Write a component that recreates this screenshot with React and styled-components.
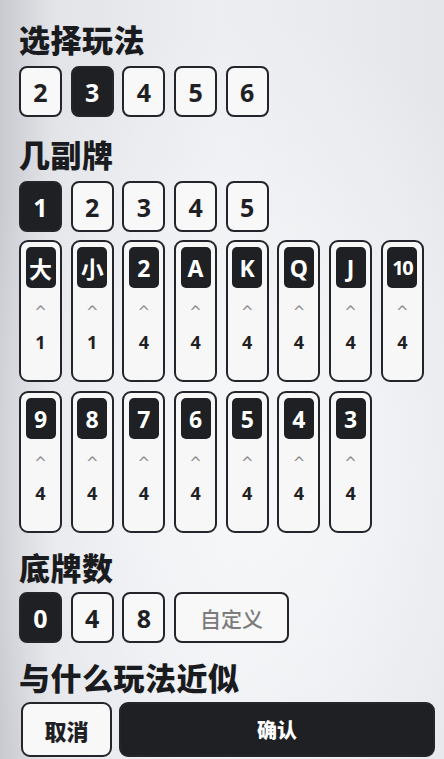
import styled, { createGlobalStyle } from 'styled-components';

const GlobalStyle = createGlobalStyle`
  html, body {
    margin: 0;
    padding: 0;
  }
  body {
    font-family: "Noto Sans", "Noto Sans CJK SC", sans-serif;
    color: #1e2024;
  }
`;

const Page = styled.div`
  width: 444px;
  height: 759px;
  box-sizing: border-box;
  overflow: hidden;
  padding: 20px 9px 0 19px;
  background:
    radial-gradient(ellipse 70% 60% at 58% 62%, #f7f8fa 0%, rgba(247, 248, 250, 0) 100%),
    linear-gradient(90deg, #c8cad0 0%, #e2e4e8 12%, #eceef1 50%, #e4e6ea 100%);
`;

const Section = styled.section`
  display: flex;
  flex-direction: column;
  gap: ${p => p.$gap || 9}px;
  margin-top: ${p => p.$top || 0}px;
`;

const Title = styled.h2`
  margin: 0;
  font-family: "Noto Sans CJK SC", sans-serif;
  font-size: 31px;
  font-weight: 900;
  line-height: 37px;
  letter-spacing: 0.5px;
  color: #1a1b1e;
`;

const Row = styled.div`
  display: flex;
  gap: 8.7px;
`;

const Chip = styled.button`
  box-sizing: border-box;
  width: ${p => p.$wide ? '115px' : '43px'};
  height: 51px;
  padding: 0;
  border: 2px solid #23252a;
  border-radius: 8px;
  background: ${p => p.$on ? '#1e2024' : '#f8f8f8'};
  color: ${p => p.$on ? '#ffffff' : p.$muted ? '#7c7c7c' : '#1e2024'};
  font-family: "Noto Sans", "Noto Sans CJK SC", sans-serif;
  font-size: ${p => p.$wide ? '21px' : '25px'};
  font-weight: ${p => p.$wide ? 500 : 700};
  display: flex;
  align-items: center;
  justify-content: center;
`;

const CardGrid = styled.div`
  display: grid;
  grid-template-columns: repeat(8, 43px);
  column-gap: 8.7px;
  row-gap: 9px;
  margin-top: -1px;
`;

const Card = styled.div`
  box-sizing: border-box;
  height: 142px;
  border: 2px solid #23252a;
  border-radius: 9px;
  background: #f7f7f7;
  padding-top: 5px;
  display: flex;
  flex-direction: column;
  align-items: center;
`;

const Face = styled.div`
  width: 30px;
  height: 41px;
  border-radius: 5px;
  background: #1e2024;
  color: #ffffff;
  font-family: "Noto Sans", "Noto Sans CJK SC", sans-serif;
  font-size: ${p => p.$small ? '20px' : '23px'};
  font-weight: 700;
  letter-spacing: ${p => p.$small ? '-1.5px' : '0'};
  display: flex;
  align-items: center;
  justify-content: center;
`;

const Caret = styled.div`
  margin-top: 17px;
  color: #8a8a8a;
  font-size: 15px;
  line-height: 14px;
  font-family: "DejaVu Sans", sans-serif;
`;

const Count = styled.div`
  margin-top: 13px;
  font-size: 18px;
  font-weight: 700;
  line-height: 20px;
  color: #1e2024;
`;

const Actions = styled.div`
  display: flex;
  gap: 7px;
  padding-left: 2px;
`;

const Action = styled.button`
  box-sizing: border-box;
  height: 55px;
  width: ${p => p.$primary ? 'auto' : '91px'};
  flex: ${p => p.$primary ? 1 : 'none'};
  border: 2px solid #23252a;
  border-radius: 9px;
  background: ${p => p.$primary ? '#1e2024' : '#f8f8f8'};
  color: ${p => p.$primary ? '#ffffff' : '#1e2024'};
  font-family: "Noto Sans CJK SC", sans-serif;
  font-size: ${p => p.$primary ? '20px' : '22px'};
  font-weight: 900;
  padding: 0;
`;

const players = [2, 3, 4, 5, 6];
const decks = [1, 2, 3, 4, 5];
const cards = [
  ['大', 1], ['小', 1], ['2', 4], ['A', 4], ['K', 4], ['Q', 4], ['J', 4], ['10', 4],
  ['9', 4], ['8', 4], ['7', 4], ['6', 4], ['5', 4], ['4', 4], ['3', 4],
];
const bottom = [0, 4, 8];

export default function App() {
  return (
    <Page>
      <GlobalStyle />
      <Section>
        <Title>选择玩法</Title>
        <Row>
          {players.map(n => <Chip key={n} $on={n === 3}>{n}</Chip>)}
        </Row>
      </Section>

      <Section $top={18} $gap={9}>
        <Title>几副牌</Title>
        <Row>
          {decks.map(n => <Chip key={n} $on={n === 1}>{n}</Chip>)}
        </Row>
        <CardGrid>
          {cards.map(([face, count]) => (
            <Card key={face}>
              <Face $small={face.length > 1}>{face}</Face>
              <Caret>^</Caret>
              <Count>{count}</Count>
            </Card>
          ))}
        </CardGrid>
      </Section>

      <Section $top={15} $gap={7}>
        <Title>底牌数</Title>
        <Row>
          {bottom.map(n => <Chip key={n} $on={n === 0}>{n}</Chip>)}
          <Chip $wide $muted>自定义</Chip>
        </Row>
      </Section>

      <Section $top={15} $gap={7}>
        <Title>与什么玩法近似</Title>
        <Actions>
          <Action>取消</Action>
          <Action $primary>确认</Action>
        </Actions>
      </Section>
    </Page>
  );
}
